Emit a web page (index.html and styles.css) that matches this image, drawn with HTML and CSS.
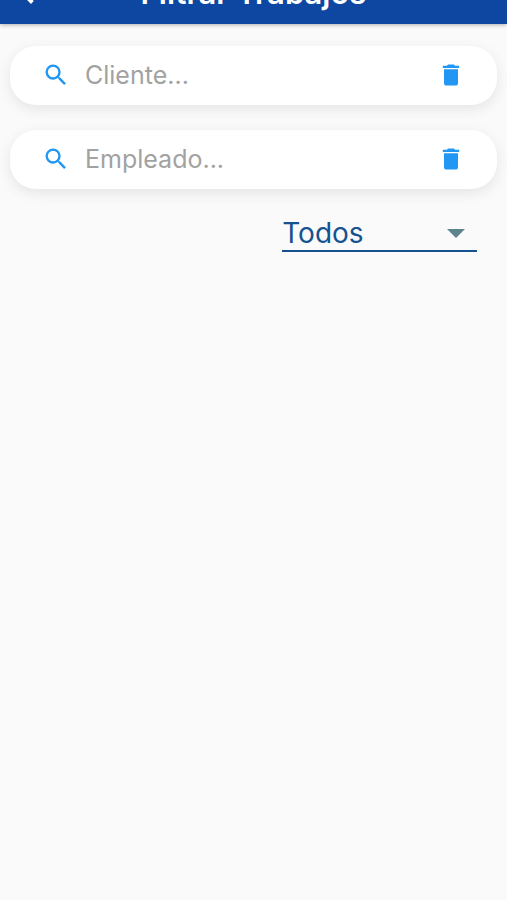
FILE: index.html
```html
<!DOCTYPE html>
<html lang="es">
<head>
	<meta charset="utf-8">
	<meta name="viewport" content="width=device-width, initial-scale=1">
	<title>Filtrar Trabajos</title>
	<link rel="stylesheet" href="styles.css">
</head>
<body>
	<header class="topbar">
		<button class="back" type="button" aria-label="Atrás">
			<svg viewBox="0 0 24 24"><path d="M17.8 4.2 15.4 1.800 5.2 12l10.200 10.200 2.400-2.400L10 12z"/></svg>
		</button>
		<h1 class="title">Filtrar Trabajos</h1>
	</header>

	<main class="filters">
		<div class="search">
			<label class="icon" for="cliente" aria-label="Cliente">
				<svg viewBox="0 0 24 24"><path d="M15.5 14h-.79l-.28-.27A6.47 6.47 0 0 0 16 9.5 6.5 6.5 0 1 0 9.5 16c1.61 0 3.09-.59 4.23-1.57l.27.28v.79l5 4.99L20.49 19l-4.99-5zm-6 0a4.5 4.5 0 1 1 0-9 4.5 4.5 0 0 1 0 9z"/></svg>
			</label>
			<input class="field" id="cliente" type="text" placeholder="Cliente...">
			<button class="icon" type="button" aria-label="Borrar cliente">
				<svg viewBox="0 0 24 24"><path d="M6 19c0 1.1.9 2 2 2h8c1.1 0 2-.9 2-2V7H6v12zM19 4h-3.5l-1-1h-5l-1 1H5v2h14V4z"/></svg>
			</button>
		</div>

		<div class="search">
			<label class="icon" for="empleado" aria-label="Empleado">
				<svg viewBox="0 0 24 24"><path d="M15.5 14h-.79l-.28-.27A6.47 6.47 0 0 0 16 9.5 6.5 6.5 0 1 0 9.5 16c1.61 0 3.09-.59 4.23-1.57l.27.28v.79l5 4.99L20.49 19l-4.99-5zm-6 0a4.5 4.5 0 1 1 0-9 4.5 4.5 0 0 1 0 9z"/></svg>
			</label>
			<input class="field" id="empleado" type="text" placeholder="Empleado...">
			<button class="icon" type="button" aria-label="Borrar empleado">
				<svg viewBox="0 0 24 24"><path d="M6 19c0 1.1.9 2 2 2h8c1.1 0 2-.9 2-2V7H6v12zM19 4h-3.5l-1-1h-5l-1 1H5v2h14V4z"/></svg>
			</button>
		</div>

		<div class="status">
			<select class="select" aria-label="Estado">
				<option>Todos</option>
			</select>
			<svg class="arrow" viewBox="0 0 18 9"><path d="M0 0h18L9 9z"/></svg>
		</div>
	</main>
</body>
</html>
```

FILE: styles.css
```css
* {
	box-sizing: border-box;
}

body {
	margin: 0;
	background: #fafafa;
	font-family: Inter, Roboto, sans-serif;
}

button {
	padding: 0;
	border: none;
	background: none;
	cursor: pointer;
}

svg {
	display: block;
	width: 100%;
	fill: currentColor;
}

/* top bar, scrolled partly out of view */
.topbar {
	display: grid;
	grid-template-columns: 56px 1fr 56px;
	grid-template-rows: 24px;
	align-items: end;
	overflow: hidden;
	background: #0d47a1;
	color: #fff;
	box-shadow: 0 1px 4px rgba(0, 0, 0, 0.3);
}

.back {
	width: 28px;
	height: 28px;
	margin: 0 0 18px 13px;
	color: #fff;
}

.title {
	margin: 0 0 12px;
	font-size: 31px;
	line-height: 38px;
	font-weight: 600;
	text-align: center;
}

.filters {
	display: flex;
	flex-direction: column;
	gap: 25px;
	padding: 22px 10px;
}

.search {
	display: flex;
	align-items: center;
	height: 59px;
	padding: 0 32px 1px;
	border-radius: 26px;
	background: #fff;
	box-shadow: 0 4px 14px rgba(0, 0, 0, 0.09);
}

.icon {
	flex: none;
	width: 28px;
	height: 28px;
	color: #2196f3;
}

.field {
	flex: 1;
	min-width: 0;
	margin-left: 15px;
	padding: 0;
	border: none;
	outline: none;
	background: none;
	font: 25px/32px Inter, Roboto, sans-serif;
	color: #333;
}

.field::placeholder {
	color: #a2a2a2;
	opacity: 1;
}

.status {
	position: relative;
	align-self: flex-end;
	width: 40%;
	margin-right: 20px;
}

.select {
	display: block;
	width: 100%;
	height: 38px;
	padding: 2px 0 0;
	border: none;
	border-bottom: 2px solid #15528f;
	border-radius: 0;
	outline: none;
	appearance: none;
	background: none;
	font: 28px/34px Inter, Roboto, sans-serif;
	color: #15528f;
}

.arrow {
	position: absolute;
	top: 15px;
	right: 12px;
	width: 18px;
	color: #5d838d;
	pointer-events: none;
}
```
